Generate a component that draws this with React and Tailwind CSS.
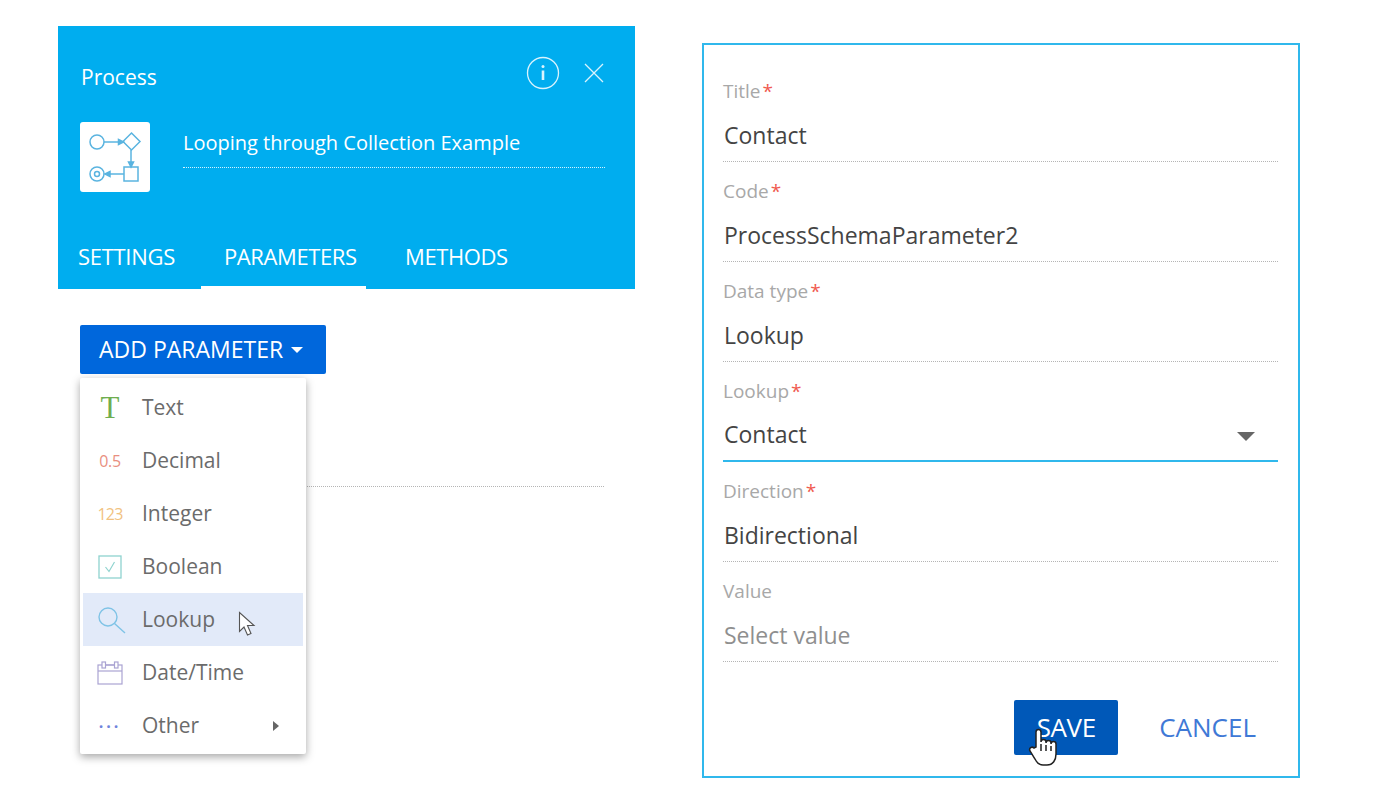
import React from 'react';

const ProcessIcon = () => (
    <svg width="70" height="70" viewBox="0 0 70 70" fill="none" stroke="#5ab4e0" strokeWidth="1.5">
        <circle cx="17" cy="20" r="7" />
        <path d="M24 20h15" />
        <path d="M43.500 20l-5-2.500v5z" fill="#5ab4e0" />
        <path d="M51.500 11l8.500 8.500-8.500 8.500-8.500-8.500z" />
        <path d="M51 28v13" />
        <path d="M51 45l-2.500-5h5z" fill="#5ab4e0" />
        <rect x="44" y="45" width="14" height="14" />
        <circle cx="17" cy="52" r="7" />
        <circle cx="17" cy="52" r="2.500" />
        <path d="M28 52h16" />
        <path d="M25 52l5-2.500v5z" fill="#5ab4e0" />
    </svg>
);

const InfoIcon = () => (
    <svg width="34" height="34" viewBox="0 0 34 34" fill="none" stroke="#d9f3fd" strokeWidth="1.3">
        <circle cx="17" cy="17" r="15.500" />
        <circle cx="17" cy="10.500" r="1.500" fill="#d9f3fd" stroke="none" />
        <path d="M17 14.500v9.500" strokeWidth="2.600" />
    </svg>
);

const CloseIcon = () => (
    <svg width="20" height="20" viewBox="0 0 20 20" fill="none" stroke="#d9f3fd" strokeWidth="1.3">
        <path d="M1 1l18 18M19 1L1 19" />
    </svg>
);

const BooleanIcon = () => (
    <svg width="24" height="24" viewBox="0 0 24 24" fill="none">
        <rect x="1" y="1" width="22" height="22" stroke="#8fd3cf" strokeWidth="1.3" />
        <path d="M7.500 12l3.500 4.500 5.500-9.500" stroke="#8fd3cf" strokeWidth="1.200" />
    </svg>
);

const SearchIcon = () => (
    <svg width="28" height="27" viewBox="0 0 28 27" fill="none" stroke="#7fc3e6" strokeWidth="1.4" className="ml-[3px] mt-[2px]">
        <circle cx="10" cy="10" r="9" />
        <path d="M16.500 16.500L27 26" />
    </svg>
);

const CalendarIcon = () => (
    <svg width="26" height="26" viewBox="0 0 26 26" fill="none" stroke="#aaa3d2" strokeWidth="1.2">
        <rect x="1" y="5" width="24" height="19" />
        <path d="M1 11h24" />
        <rect x="5" y="2" width="3.500" height="6" fill="#fff" />
        <rect x="17.500" y="2" width="3.500" height="6" fill="#fff" />
        <path d="M8.500 5h9" />
    </svg>
);

const ArrowCursor = () => (
    <svg width="20" height="28" viewBox="0 0 20 28" fill="#fff" stroke="#555" strokeWidth="1.1">
        <path d="M1.500 1.500v19l4.500-4.500 3.500 8 3.500-1.500-3.500-8h6.500z" />
    </svg>
);

const HandCursor = () => (
    <svg width="32" height="40" viewBox="0 0 32 40" fill="#fff" stroke="#222" strokeWidth="1.5">
        <path d="M9 20V5a2.500 2.500 0 0 1 5 0v10a2.500 2.500 0 0 1 5 0v1a2.500 2.500 0 0 1 5 0v1a2.500 2.500 0 0 1 5 0v10c0 6-3 11-9 11h-4c-4 0-6-2-8-6l-5-8c-1.500-3 2-5 4-3z" />
        <path d="M14 17v7M19 18v6M24 19v5" />
    </svg>
);

const items = [
    { label: 'Text', icon: <span className="font-['Liberation_Serif',serif] text-[31px] leading-none text-[#6fae4f]">T</span> },
    { label: 'Decimal', icon: <span className="text-[16px] tracking-[-0.3px] text-[#e98f80]">0.5</span> },
    { label: 'Integer', icon: <span className="text-[16px] tracking-[-0.8px] text-[#f1c27f]">123</span> },
    { label: 'Boolean', icon: <BooleanIcon /> },
    { label: 'Lookup', icon: <SearchIcon />, active: true },
    { label: 'Date/Time', icon: <CalendarIcon /> },
    { label: 'Other', icon: <span className="text-[16px] font-bold tracking-[3px] leading-none text-[#6f84dc] -mt-2">...</span>, more: true },
];

const fields = [
    { label: 'Title', value: 'Contact', required: true },
    { label: 'Code', value: 'ProcessSchemaParameter2', required: true },
    { label: 'Data type', value: 'Lookup', required: true },
    { label: 'Lookup', value: 'Contact', required: true, focused: true },
    { label: 'Direction', value: 'Bidirectional', required: true },
    { label: 'Value', value: 'Select value', placeholder: true },
];

const App = () => {
    return (
        <div className="flex items-start w-[1400px] h-[800px] bg-white pl-[58px] pt-[26px] font-['Open_Sans',sans-serif]">
            <div className="w-[577px]">
                <div className="h-[263px] bg-[#00adef] text-white flex flex-col">
                    <div className="flex items-center justify-between pl-[23px] pr-[31px] pt-[31px] h-[72px]">
                        <span className="text-[21px] leading-none">Process</span>
                        <div className="flex items-center gap-[24px] -mt-[10px]">
                            <InfoIcon />
                            <CloseIcon />
                        </div>
                    </div>
                    <div className="flex pl-[22px] pr-[30px] pt-[24px]">
                        <div className="w-[70px] h-[70px] bg-white rounded-[3px]">
                            <ProcessIcon />
                        </div>
                        <div className="ml-[33px] flex-1 h-[46px] flex items-center pb-[3px] border-b border-dotted border-[#d5f2ff] text-[20px]">
                            Looping through Collection Example
                        </div>
                    </div>
                    <div className="mt-auto flex items-end h-[60px] text-[22px] tracking-[-0.4px]">
                        <div className="w-[137px] pb-[16px] text-center tracking-[-0.3px]">SETTINGS</div>
                        <div className="ml-[6px] w-[165px] pb-[13px] pl-[23px] border-b-[3px] border-white">PARAMETERS</div>
                        <div className="ml-[39px] pb-[16px]">METHODS</div>
                    </div>
                </div>
                <div className="relative pl-[22px] pt-[36px]">
                    <div className="w-[246px] h-[49px] pl-[19px] bg-[#0067dc] rounded-[2px] text-white text-[23px] flex items-center gap-[8px]">
                        ADD PARAMETER
                        <span className="w-0 h-0 border-x-[6px] border-x-transparent border-t-[6px] border-t-white" />
                    </div>
                    <div className="mt-[112px] mr-[31px] border-b border-dotted border-[#b5b5b5]" />
                    <div className="absolute left-[22px] top-[89px] w-[226px] h-[376px] bg-white rounded-[2px] shadow-[0_3px_8px_rgba(0,0,0,0.35)] px-[3px] pt-[3px]">
                        {items.map((item) => (
                            <div
                                key={item.label}
                                className={`relative flex items-center h-[53px] text-[21px] text-[#6b6b6b] ${item.active ? 'bg-[#e2eaf9]' : ''}`}
                            >
                                <div className="w-[59px] flex justify-center pr-[5px]">{item.icon}</div>
                                <span>{item.label}</span>
                                {item.active && <div className="ml-[23px] mt-[10px]"><ArrowCursor /></div>}
                                {item.more && <span className="ml-auto mr-[24px] w-0 h-0 border-y-[5px] border-y-transparent border-l-[6px] border-l-[#666]" />}
                            </div>
                        ))}
                    </div>
                </div>
            </div>
            <div className="ml-[67px] mt-[17px] w-[598px] h-[735px] border-2 border-[#30b8ec] pl-[19px] pr-[20px] pt-[35px] flex flex-col">
                {fields.map((field) => (
                    <div key={field.label} className="relative h-[100px] shrink-0">
                        <div className="h-[22px] text-[19px] leading-[22px] text-[#a8a8a8]">
                            {field.label}
                            {field.required && <span className="text-[#f05a4f] ml-[2px]">*</span>}
                        </div>
                        <div className={`absolute left-0 right-0 top-[22px] h-[60px] flex items-center pl-[1px] pt-[7px] text-[23px] ${field.placeholder ? 'text-[#8f8f8f]' : 'text-[#444]'} ${field.focused ? 'border-b-2 border-[#30b8ec]' : 'border-b border-dotted border-[#b5b5b5]'}`}>
                            {field.value}
                            {field.focused && <span className="absolute right-[23px] top-[30px] w-0 h-0 border-x-[9px] border-x-transparent border-t-[9px] border-t-[#666]" />}
                        </div>
                    </div>
                ))}
                <div className="relative flex items-start justify-end pr-[22px] mt-[20px]">
                    <div className="relative w-[104px] h-[55px] bg-[#0058b8] rounded-[2px] text-white text-[26px] tracking-[-0.4px] flex items-center justify-center">
                        SAVE
                        <div className="absolute left-[13px] top-[27px]"><HandCursor /></div>
                    </div>
                    <div className="ml-[41px] h-[55px] flex items-center text-[26px] text-[#3f79d6]">CANCEL</div>
                </div>
            </div>
        </div>
    );
};

export default App;
